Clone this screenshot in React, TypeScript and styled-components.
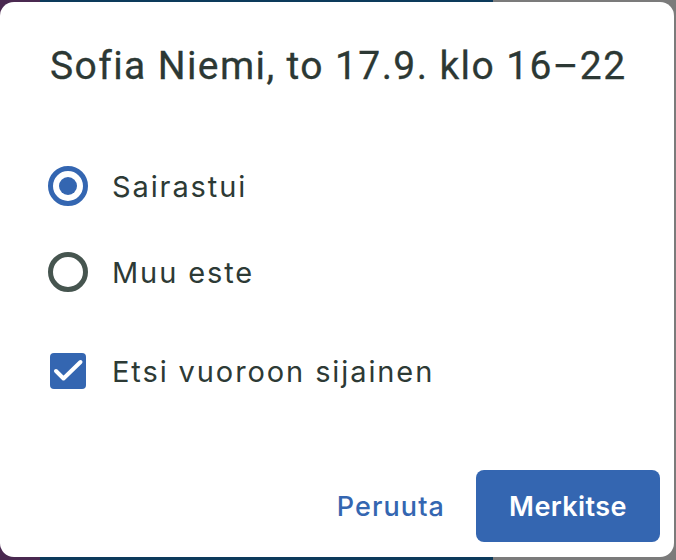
import { FC, useState } from 'react';
import styled, { createGlobalStyle } from 'styled-components';

const GlobalStyle = createGlobalStyle`
  html, body {
    margin: 0;
    padding: 0;
  }
  body {
    width: 676px;
    height: 560px;
    overflow: hidden;
  }
`;

const Backdrop = styled.div`
  width: 676px;
  height: 560px;
  padding-top: 2px;
  box-sizing: border-box;
  background: linear-gradient(
    to right,
    #4a2950 0 40px,
    #0c3a5b 40px 493px,
    #7b7b7b 493px
  );
`;

const Dialog = styled.div`
  width: 674px;
  height: 555px;
  box-sizing: border-box;
  background: #fff;
  border-radius: 14px;
  padding: 0 14px 15px 48px;
  display: flex;
  flex-direction: column;
  color: #2d3a35;
`;

const Title = styled.h2`
  margin: 39px 0 0 2px;
  font-family: Roboto, 'Liberation Sans', sans-serif;
  font-weight: 400;
  font-size: 39px;
  letter-spacing: 1.4px;
  line-height: 50px;
  white-space: nowrap;
  color: #2c3834;
  -webkit-text-stroke: 0.3px #2c3834;
`;

const Options = styled.div`
  display: flex;
  flex-direction: column;
  margin-top: 75px;
`;

const Row = styled.label<{ $gap?: number }>`
  display: flex;
  align-items: center;
  gap: 24px;
  height: 40px;
  margin-top: ${({ $gap }) => $gap ?? 0}px;
  cursor: pointer;
  font-family: Inter, 'Open Sans', sans-serif;
  font-size: 29px;
  letter-spacing: 1.9px;
  color: #2d3a35;
`;

const RadioCircle = styled.span<{ $checked: boolean }>`
  width: 40px;
  height: 40px;
  box-sizing: border-box;
  border-radius: 50%;
  border: 5px solid ${({ $checked }) => ($checked ? '#3466b1' : '#46554f')};
  display: flex;
  align-items: center;
  justify-content: center;
  flex: none;
  &::after {
    content: '';
    width: 18px;
    height: 18px;
    border-radius: 50%;
    background: #3466b1;
    display: ${({ $checked }) => ($checked ? 'block' : 'none')};
  }
`;

const CheckBox = styled.span<{ $checked: boolean }>`
  width: 36px;
  height: 36px;
  margin: 0 2px;
  border-radius: 4px;
  box-sizing: border-box;
  background: ${({ $checked }) => ($checked ? '#3466b1' : '#fff')};
  border: ${({ $checked }) => ($checked ? 'none' : '3px solid #46554f')};
  display: flex;
  align-items: center;
  justify-content: center;
  flex: none;
`;

const Footer = styled.div`
  margin-top: auto;
  display: flex;
  justify-content: flex-end;
  align-items: center;
  gap: 15px;
`;

const TextButton = styled.button`
  height: 72px;
  padding: 0 16px;
  border: none;
  background: none;
  font-family: Inter, 'Open Sans', sans-serif;
  font-weight: 500;
  font-size: 27px;
  letter-spacing: 1.1px;
  color: #3466b1;
  cursor: pointer;
`;

const PrimaryButton = styled.button`
  width: 184px;
  height: 72px;
  border: none;
  border-radius: 8px;
  background: #3466b1;
  color: #fff;
  font-family: Inter, 'Open Sans', sans-serif;
  font-weight: 600;
  font-size: 27px;
  letter-spacing: 0.4px;
  cursor: pointer;
`;

type Reason = 'sick' | 'other';

export default function App() {
  const [reason, setReason] = useState<Reason>('sick');
  const [findSub, setFindSub] = useState<boolean>(true);

  return (
    <>
      <GlobalStyle />
      <Backdrop>
        <Dialog>
          <Title>Sofia Niemi, to 17.9. klo 16–22</Title>
          <Options>
            <Row onClick={() => setReason('sick')}>
              <RadioCircle $checked={reason === 'sick'} />
              Sairastui
            </Row>
            <Row $gap={46} onClick={() => setReason('other')}>
              <RadioCircle $checked={reason === 'other'} />
              Muu este
            </Row>
            <Row $gap={59} onClick={() => setFindSub(!findSub)}>
              <CheckBox $checked={findSub}>
                {findSub && (
                  <svg width="36" height="36" viewBox="0 0 36 36">
                    <path d="M6 18l7.5 7.5L30.5 9" fill="none" stroke="#fff" strokeWidth="4" strokeLinecap="round" strokeLinejoin="round" />
                  </svg>
                )}
              </CheckBox>
              Etsi vuoroon sijainen
            </Row>
          </Options>
          <Footer>
            <TextButton>Peruuta</TextButton>
            <PrimaryButton>Merkitse</PrimaryButton>
          </Footer>
        </Dialog>
      </Backdrop>
    </>
  );
}
